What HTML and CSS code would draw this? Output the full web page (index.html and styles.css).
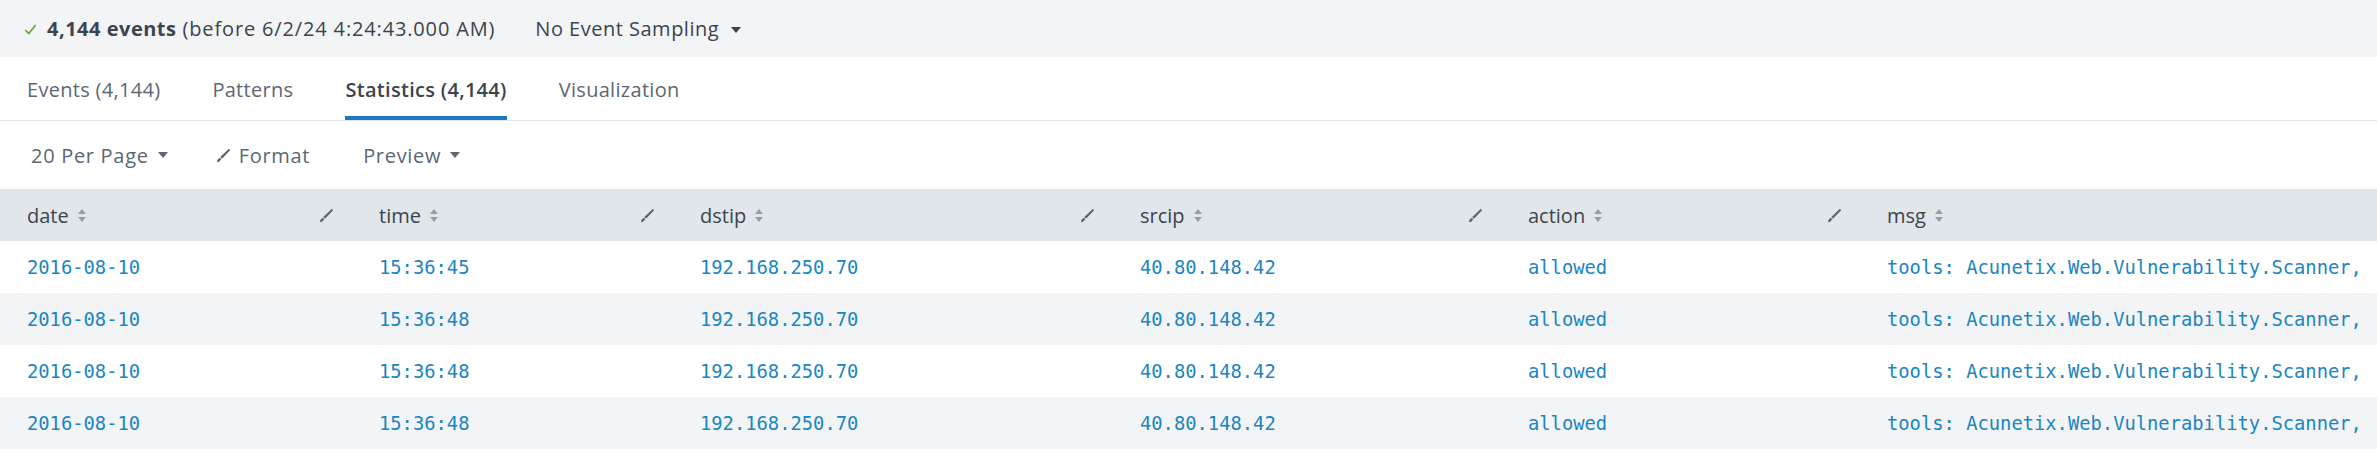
FILE: index.html
```html
<!DOCTYPE html>
<html lang="en">
<head>
<meta charset="utf-8">
<title>Search results</title>
<link rel="stylesheet" href="styles.css">
</head>
<body>
<div class="summary">
  <span class="status">
    <svg class="check" viewBox="0 0 12 12" width="13" height="13"><polyline points="1.2,6.6 4.4,9.8 10.8,1.8" fill="none" stroke="#65a637" stroke-width="1.5"/></svg>
    <b>4,144 events</b> (before 6/2/24 4:24:43.000 AM)
  </span>
  <span class="sampling">No Event Sampling <svg class="caret" viewBox="0 0 10 6" width="10" height="6"><polygon points="0,0 10,0 5,6" fill="#3c444d"/></svg></span>
</div>

<nav class="tabs">
  <a class="tab">Events (4,144)</a>
  <a class="tab">Patterns</a>
  <a class="tab active">Statistics (4,144)</a>
  <a class="tab">Visualization</a>
</nav>

<div class="toolbar">
  <span class="tool">20 Per Page <svg class="caret" viewBox="0 0 10 6" width="10" height="6"><polygon points="0,0 10,0 5,6" fill="#5c6773"/></svg></span>
  <span class="tool"><svg class="pencil" viewBox="0 0 14 14" width="15" height="15"><path d="M12 0.8 L13.2 2 L5.6 10 L4 8.4 Z" fill="#5c6773"/><path d="M3.4 9 L5 10.6 L3 12.8 L1 13.2 L1.2 11.2 Z" fill="#5c6773"/></svg>Format</span>
  <span class="tool preview">Preview <svg class="caret" viewBox="0 0 10 6" width="10" height="6"><polygon points="0,0 10,0 5,6" fill="#5c6773"/></svg></span>
</div>

<table class="results">
  <colgroup>
    <col class="c-date"><col class="c-time"><col class="c-dstip"><col class="c-srcip"><col class="c-action"><col class="c-msg">
  </colgroup>
  <thead>
    <tr>
      <th><div class="th"><span>date</span><svg class="sort" viewBox="0 0 8 13" width="8" height="13"><polygon points="4,0 8,5 0,5" /><polygon points="0,8 8,8 4,13" /></svg><svg class="pencil" viewBox="0 0 14 14" width="15" height="15"><path d="M12 0.8 L13.2 2 L5.6 10 L4 8.4 Z"/><path d="M3.4 9 L5 10.6 L3 12.8 L1 13.2 L1.2 11.2 Z"/></svg></div></th>
      <th><div class="th"><span>time</span><svg class="sort" viewBox="0 0 8 13" width="8" height="13"><polygon points="4,0 8,5 0,5" /><polygon points="0,8 8,8 4,13" /></svg><svg class="pencil" viewBox="0 0 14 14" width="15" height="15"><path d="M12 0.8 L13.2 2 L5.6 10 L4 8.4 Z"/><path d="M3.4 9 L5 10.6 L3 12.8 L1 13.2 L1.2 11.2 Z"/></svg></div></th>
      <th><div class="th"><span>dstip</span><svg class="sort" viewBox="0 0 8 13" width="8" height="13"><polygon points="4,0 8,5 0,5" /><polygon points="0,8 8,8 4,13" /></svg><svg class="pencil" viewBox="0 0 14 14" width="15" height="15"><path d="M12 0.8 L13.2 2 L5.6 10 L4 8.4 Z"/><path d="M3.4 9 L5 10.6 L3 12.8 L1 13.2 L1.2 11.2 Z"/></svg></div></th>
      <th><div class="th"><span>srcip</span><svg class="sort" viewBox="0 0 8 13" width="8" height="13"><polygon points="4,0 8,5 0,5" /><polygon points="0,8 8,8 4,13" /></svg><svg class="pencil" viewBox="0 0 14 14" width="15" height="15"><path d="M12 0.8 L13.2 2 L5.6 10 L4 8.4 Z"/><path d="M3.4 9 L5 10.6 L3 12.8 L1 13.2 L1.2 11.2 Z"/></svg></div></th>
      <th><div class="th"><span>action</span><svg class="sort" viewBox="0 0 8 13" width="8" height="13"><polygon points="4,0 8,5 0,5" /><polygon points="0,8 8,8 4,13" /></svg><svg class="pencil" viewBox="0 0 14 14" width="15" height="15"><path d="M12 0.8 L13.2 2 L5.6 10 L4 8.4 Z"/><path d="M3.4 9 L5 10.6 L3 12.8 L1 13.2 L1.2 11.2 Z"/></svg></div></th>
      <th><div class="th"><span>msg</span><svg class="sort" viewBox="0 0 8 13" width="8" height="13"><polygon points="4,0 8,5 0,5" /><polygon points="0,8 8,8 4,13" /></svg></div></th>
    </tr>
  </thead>
  <tbody>
    <tr><td>2016-08-10</td><td>15:36:45</td><td>192.168.250.70</td><td>40.80.148.42</td><td>allowed</td><td>tools: Acunetix.Web.Vulnerability.Scanner,</td></tr>
    <tr><td>2016-08-10</td><td>15:36:48</td><td>192.168.250.70</td><td>40.80.148.42</td><td>allowed</td><td>tools: Acunetix.Web.Vulnerability.Scanner,</td></tr>
    <tr><td>2016-08-10</td><td>15:36:48</td><td>192.168.250.70</td><td>40.80.148.42</td><td>allowed</td><td>tools: Acunetix.Web.Vulnerability.Scanner,</td></tr>
    <tr><td>2016-08-10</td><td>15:36:48</td><td>192.168.250.70</td><td>40.80.148.42</td><td>allowed</td><td>tools: Acunetix.Web.Vulnerability.Scanner,</td></tr>
  </tbody>
</table>
</body>
</html>
```

FILE: styles.css
```css
* { box-sizing: border-box; }

html, body {
  margin: 0;
  padding: 0;
  background: #ffffff;
}

body {
  font-family: "Open Sans", "Liberation Sans", sans-serif;
  font-size: 20px;
  letter-spacing: 0.3px;
  color: #3c444d;
  overflow: hidden;
}

.summary {
  height: 57px;
  background: #f2f4f5;
  display: flex;
  align-items: center;
  padding-left: 24px;
  gap: 40px;
  color: #3c444d;
  letter-spacing: 0.5px;
}

.status { letter-spacing: 0.85px; }
.summary b { font-weight: 700; letter-spacing: 0.5px; }

.check { margin-right: 4px; vertical-align: 0; }

.caret { margin-left: 6px; vertical-align: 3px; }

.tabs {
  height: 64px;
  display: flex;
  align-items: stretch;
  gap: 52px;
  padding-left: 27px;
  border-bottom: 1px solid #e1e6eb;
}

.tab {
  display: flex;
  align-items: center;
  padding-top: 5px;
  border-bottom: 4px solid transparent;
  color: #5c6773;
  cursor: pointer;
}

.tab.active {
  color: #3c444d;
  font-weight: 600;
  border-bottom-color: #1f77c0;
}

.toolbar {
  height: 68px;
  display: flex;
  align-items: center;
  padding-left: 31px;
  gap: 48px;
  color: #5c6773;
  letter-spacing: 0.7px;
}

.toolbar .caret { margin-left: 9px; }
.tool { display: flex; align-items: center; }
.tool.preview { margin-left: 5px; }
.tool .pencil { margin-right: 8px; }

.results {
  width: 100%;
  border-collapse: collapse;
  table-layout: fixed;
}

.c-date { width: 352px; }
.c-time { width: 321px; }
.c-dstip { width: 440px; }
.c-srcip { width: 388px; }
.c-action { width: 359px; }

.results th {
  height: 52px;
  background: #e1e6eb;
  font-weight: 400;
  text-align: left;
  padding: 0 18px 0 27px;
  color: #3c444d;
  letter-spacing: 0;
}

.th {
  display: flex;
  align-items: center;
}

.sort {
  margin-left: 9px;
  fill: #959ea7;
}

.th .pencil {
  margin-left: auto;
  fill: #5c6773;
}

.results td {
  height: 52px;
  padding: 0 19px 0 27px;
  font-family: "DejaVu Sans Mono", "Liberation Mono", monospace;
  font-size: 18.8px;
  letter-spacing: 0;
  color: #1a86c3;
  white-space: nowrap;
  overflow: hidden;
}

.results tbody tr:nth-child(even) td {
  background: #f2f4f5;
}
```
